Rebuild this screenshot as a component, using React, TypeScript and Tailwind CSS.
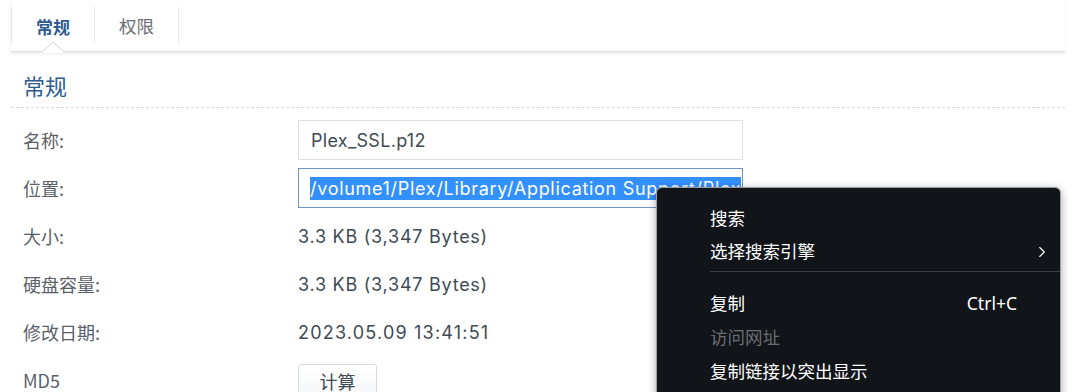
import { ChevronRight } from 'lucide-react';

const font = { fontFamily: 'Inter, "Noto Sans CJK SC", sans-serif' };
const cjk = { fontFamily: '"Noto Sans CJK SC", "Noto Sans", sans-serif' };

const rows = [
  { label: '名称:', kind: 'input', value: 'Plex_SSL.p12' },
  { label: '位置:', kind: 'selected', value: '/volume1/Plex/Library/Application Support/Plex' },
  { label: '大小:', kind: 'text', value: '3.3 KB (3,347 Bytes)' },
  { label: '硬盘容量:', kind: 'text', value: '3.3 KB (3,347 Bytes)' },
  { label: '修改日期:', kind: 'date', value: '2023.05.09 13:41:51' },
  { label: 'MD5', kind: 'button', value: '计算' },
];

function MenuItem({ label, shortcut, disabled }: { label: string; shortcut?: string; disabled?: boolean }) {
  return (
    <div className={`flex h-[34px] items-center pl-[53px] pr-[43px] text-[17.5px] ${disabled ? 'text-[#6b6e73]' : 'text-white'}`}>
      <span className="flex-1">{label}</span>
      {shortcut && <span style={{ fontFamily: '"Noto Sans", sans-serif' }}>{shortcut}</span>}
    </div>
  );
}

export default function App() {
  return (
    <div className="relative h-[392px] w-[1076px] overflow-hidden bg-white" style={font}>
      {/* Tabs */}
      <div className="relative mx-[11px] h-[52px] border-b border-[#dadde2] shadow-[0_2px_3px_rgba(0,0,0,0.08)]" style={cjk}>
        <div className="flex h-full pt-[7px]">
          <div className="flex h-[36px] w-[84px] items-center justify-center border-x border-[#e3e7ec] pt-[3px] text-[17px] font-bold text-[#2f5b90]">
            常规
          </div>
          <div className="flex h-[36px] w-[84px] items-center justify-center border-r border-[#e3e7ec] pt-[3px] text-[17.5px] text-[#6a6f75]">
            权限
          </div>
        </div>
        <svg className="absolute left-[31px] top-[41px]" width="22" height="12" viewBox="0 0 22 12">
          <path d="M0 11 L11 1 L22 11" fill="#fff" stroke="#d2d6db" strokeWidth="1" />
          <rect x="1" y="10.5" width="20" height="2" fill="#fff" />
        </svg>
      </div>

      {/* Section */}
      <div
        className="mx-[11px] mt-[18px] border-b border-dashed border-[#cfdceb] pb-[7px] pl-[12px] text-[22px] leading-[30px] text-[#2f5b90]"
        style={cjk}
      >
        常规
      </div>

      <div className="flex flex-col gap-[8px] pl-[23px] pt-[12px]">
        {rows.map((r) => (
          <div key={r.label} className="flex h-[40px] items-center">
            <div className="w-[275px] text-[18px] text-[#5b6168]" style={cjk}>
              {r.label}
            </div>
            {r.kind === 'input' && (
              <div className="flex h-[40px] w-[445px] items-center border border-[#dde1e6] px-[12px] text-[18px] tracking-[0.3px] text-[#414b55]">
                {r.value}
              </div>
            )}
            {r.kind === 'selected' && (
              <div className="flex h-[40px] w-[445px] items-center overflow-hidden whitespace-nowrap border border-[#6f95c6] pl-[11px] text-[18px] tracking-[0.7px]">
                <span className="bg-[#3390ff] leading-[23px] text-white">{r.value}</span>
              </div>
            )}
            {r.kind === 'text' && <div className="text-[18px] tracking-[0.75px] text-[#414b55]">{r.value}</div>}
            {r.kind === 'date' && <div className="text-[18px] tracking-[1.2px] text-[#414b55]">{r.value}</div>}
            {r.kind === 'button' && (
              <div
                className="mt-[4px] flex h-[40px] w-[79px] items-center justify-center self-start rounded-[3px] border border-[#d6dbe1] bg-gradient-to-b from-white to-[#f3f5f7] pb-[6px] text-[18px] text-[#414b55]"
                style={cjk}
              >
                {r.value}
              </div>
            )}
          </div>
        ))}
      </div>

      {/* Context menu */}
      <div
        className="absolute left-[656px] top-[187px] h-[220px] w-[405px] rounded-[6px] border border-[#9b9fa5] bg-[#111419] pt-[14px] shadow-[0_2px_8px_rgba(0,0,0,0.35)]"
        style={cjk}
      >
        <div className="flex h-[33px] items-center pl-[53px] text-[17.5px] text-white">搜索</div>
        <div className="flex h-[33px] items-center pl-[53px] pr-[9px] text-[17.5px] text-white">
          <span className="flex-1">选择搜索引擎</span>
          <ChevronRight className="h-[18px] w-[18px]" strokeWidth={1.5} />
        </div>
        <div className="pb-[14px] pl-[53px] pt-[3px]">
          <div className="h-px bg-[#3c4046]" />
        </div>
        <MenuItem label="复制" shortcut="Ctrl+C" />
        <MenuItem label="访问网址" disabled />
        <MenuItem label="复制链接以突出显示" />
      </div>
    </div>
  );
}
